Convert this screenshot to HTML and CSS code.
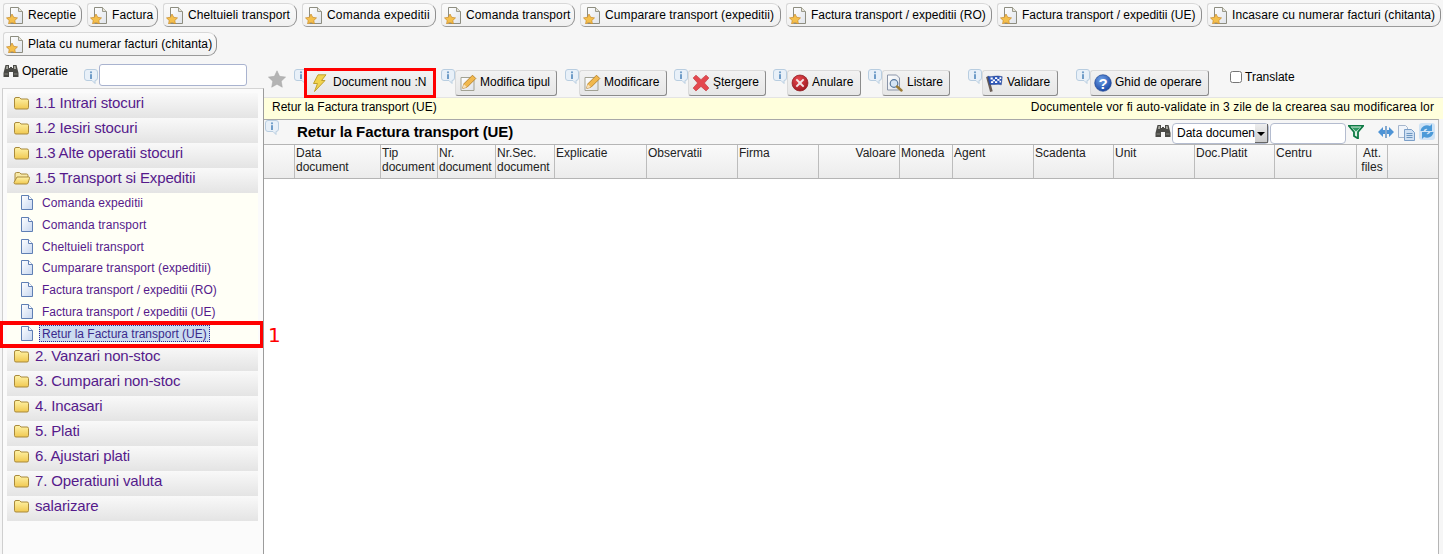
FILE: index.html
```html
<!DOCTYPE html>
<html lang="en">

<head>
    <meta charset="UTF-8">
    <meta name="viewport" content="width=device-width, initial-scale=1.0">
    <title>Retur la Factura transport (UE)</title>
    <link rel="stylesheet" href="styles.css">
</head>

<body>

    <!-- icon sprites -->
    <svg class="sprites" width="0" height="0">
        <defs>
            <linearGradient id="pageFill" x1="0" y1="0" x2="1" y2="1">
                <stop offset="0" stop-color="#ffffff"/>
                <stop offset="1" stop-color="#dfe3ea"/>
            </linearGradient>
            <linearGradient id="leafFill" x1="0" y1="0" x2="1" y2="1">
                <stop offset="0" stop-color="#ffffff"/>
                <stop offset="1" stop-color="#c6d6f0"/>
            </linearGradient>
            <linearGradient id="folderFill" x1="0" y1="0" x2="0" y2="1">
                <stop offset="0" stop-color="#fff3a8"/>
                <stop offset="1" stop-color="#f0c850"/>
            </linearGradient>
            <radialGradient id="helpFill" cx="0.4" cy="0.3" r="0.8">
                <stop offset="0" stop-color="#6d9fe6"/>
                <stop offset="1" stop-color="#123f9e"/>
            </radialGradient>
            <radialGradient id="stopFill" cx="0.4" cy="0.3" r="0.8">
                <stop offset="0" stop-color="#e8494f"/>
                <stop offset="1" stop-color="#97141c"/>
            </radialGradient>
            <symbol id="i-docstar" viewBox="0 0 18 18">
                <path d="M4.500 1.500h8l4 4v12h-12z" fill="url(#pageFill)" stroke="#8d8d80"/>
                <path d="M12.500 1.500v4h4" fill="#e6e3d6" stroke="#9a9a8c"/>
                <path d="M6 8l1.700 3.300 3.800.6-2.700 2.600.6 3.500L6 16.300 2.600 18l.6-3.500L.5 11.900l3.800-.6z" fill="#f4bf4c" stroke="#c98a26" stroke-width=".7"/>
            </symbol>
            <symbol id="i-info" viewBox="0 0 14 15">
                <path d="M3 .5h8a2.500 2.500 0 0 1 2.500 2.500v6a2.500 2.500 0 0 1-2.500 2.500v3l-3-3H3A2.500 2.500 0 0 1 .5 9V3A2.500 2.500 0 0 1 3 .5z" fill="#e8f0f8" stroke="#b8cde0"/>
                <circle cx="7" cy="3.300" r="1.100" fill="#6f9cc8"/>
                <rect x="6" y="5.200" width="2" height="4.800" fill="#6f9cc8"/>
            </symbol>
            <symbol id="i-folder" viewBox="0 0 16 14">
                <path d="M1 3a1.500 1.500 0 0 1 1.500-1.500h3.500l1.500 1.500h6A1.500 1.500 0 0 1 15 4.500v7a1.500 1.500 0 0 1-1.500 1.500h-11A1.500 1.500 0 0 1 1 11.500z" fill="url(#folderFill)" stroke="#a98a3c"/>
            </symbol>
            <symbol id="i-folderopen" viewBox="0 0 17 14">
                <path d="M2 11V3a1.500 1.500 0 0 1 1.500-1.500h3L8 3h5.500A1.500 1.500 0 0 1 15 4.500V6" fill="#f7e9a8" stroke="#a98a3c"/>
                <path d="M4 6h11.500a1 1 0 0 1 1 1.300L15 12a1.500 1.500 0 0 1-1.500 1h-11A1.500 1.500 0 0 1 1 11.500z" fill="url(#folderFill)" stroke="#a98a3c"/>
            </symbol>
            <symbol id="i-page" viewBox="0 0 14 15">
                <path d="M1.500 .5h7l4 4v10h-11z" fill="url(#leafFill)" stroke="#5f7fb4"/>
                <path d="M8.500 .5v4h4" fill="#ffffff" stroke="#5f7fb4"/>
            </symbol>
            <symbol id="i-star" viewBox="0 0 18 18">
                <path d="M9 .8l2.600 5.500 6 .8-4.400 4.100 1.100 6L9 14.300l-5.300 2.900 1.100-6L.4 7.100l6-.8z" fill="#b4b4b4" stroke="#a4a4a4" stroke-width=".5"/>
            </symbol>
            <symbol id="i-bolt" viewBox="0 0 18 18">
                <path d="M8 .8h8L11.500 6.500H15L4.500 17.500 7.500 9.500H3.500z" fill="#f2d34d" stroke="#bfa02f"/>
            </symbol>
            <symbol id="i-pencil" viewBox="0 0 18 18">
                <path d="M2 3.500h10l3 3v10H2z" fill="url(#pageFill)" stroke="#a2a294"/>
                <path d="M13.500 1.200l3.300 3.300-8.800 8.800-4.300 1 1-4.300z" fill="#f1b84e" stroke="#b47f25" stroke-width=".9"/>
                <path d="M4.700 10l3.300 3.300-4.300 1z" fill="#f7e1bb"/>
            </symbol>
            <symbol id="i-cross" viewBox="0 0 16 16">
                <path d="M3.500 1L8 5l4.500-4L15 3.500 11 8l4 4.500-2.500 2.500L8 11l-4.500 4L1 12.500 5 8 1 3.500z" fill="#e4484e" stroke="#c23a3f" stroke-width=".6"/>
            </symbol>
            <symbol id="i-stop" viewBox="0 0 18 18">
                <circle cx="9" cy="9" r="8" fill="url(#stopFill)" stroke="#8c1a1e" stroke-width=".7"/>
                <path d="M6 4.700L9 7.600l3-2.900 1.300 1.300L10.400 9l2.900 3-1.300 1.300L9 10.400l-3 2.900L4.700 12l2.900-3-2.900-3z" fill="#f3e6e6"/>
            </symbol>
            <symbol id="i-preview" viewBox="0 0 18 18">
                <path d="M1.500 1h9l3 3v12h-12z" fill="url(#pageFill)" stroke="#8b95a8"/>
                <circle cx="8" cy="9.500" r="3.800" fill="#d5e5f5" stroke="#56789e" stroke-width="1.200"/>
                <path d="M11 12.500l4.500 4" stroke="#9a7a34" stroke-width="2.400" stroke-linecap="round"/>
            </symbol>
            <symbol id="i-flag" viewBox="0 0 20 20">
                <path d="M1.500 3l4.500 16.500" stroke="#6a5d55" stroke-width="3"/>
                <path d="M2 2.500c5 1.500 9-1.500 16 .5l-1 9c-5-1.500-9 .5-13-.5z" fill="#2c55b8" stroke="#21408a" stroke-width=".6"/>
                <path d="M5 4h2.500v2H5zm5-.5h2.500v2H10zm5 0h2v2h-2zM7.500 6H10v2H7.500zm5-.5H15v2h-2.500zM5.500 8H8v2H5.500zM10 8h2.500v2H10zm5-.5h1.700v2H15z" fill="#ffffff"/>
            </symbol>
            <symbol id="i-help" viewBox="0 0 18 18">
                <circle cx="9" cy="9" r="8.300" fill="url(#helpFill)" stroke="#123a88" stroke-width=".6"/>
                <text x="9" y="14.500" text-anchor="middle" class="help-mark">?</text>
            </symbol>
            <symbol id="i-binoculars" viewBox="0 0 16 14">
                <path d="M2.500 1h3.500v3h1v-1h2v1h1V1h3.500l2 8v4H10V8H6v5H.500V9z" fill="#4a4a46"/>
                <path d="M3.500 2h1.500v3H3zM11 2h1.500L13 5h-2z" fill="#a8a8a0"/>
                <path d="M1.500 9.500h3.500v1H1.500zM11 9.500h3.500v1H11z" fill="#85857e"/>
            </symbol>
            <symbol id="i-filter" viewBox="0 0 16 14">
                <path d="M.5.500h15l-5.500 6.500v6.500L6 11V7z" fill="#dff3e6" stroke="#0f7a45" stroke-width="1.800"/>
                <path d="M3.500 2.500h9l-4.500 4z" fill="#2f9a63"/>
            </symbol>
            <symbol id="i-arrows" viewBox="0 0 16 12">
                <path d="M0 6l5-5v3H7v4H5v3zM16 6l-5-5v3H9v4h2v3z" fill="#4e94d6"/>
                <rect x="7.400" y="0" width="1.200" height="12" fill="#3a76b4"/>
            </symbol>
            <symbol id="i-copy" viewBox="0 0 17 16">
                <path d="M.5.500h7l2 2v10h-9z" fill="#f0f4fa" stroke="#a6b6cc"/>
                <path d="M6.500 4.500h7l3 3v8h-10z" fill="#cfe0f3" stroke="#7b9fc8"/>
                <path d="M8.500 8.500h6M8.500 10.500h6M8.500 12.500h6" stroke="#6d96c0"/>
            </symbol>
            <symbol id="i-refresh" viewBox="0 0 16 17">
                <rect x="0" y="0" width="16" height="17" rx="3" fill="#cfe3f5"/>
                <path d="M1.500 8a6.500 6.500 0 0 1 9.500-5L13 1v7H6.500l2-2A3.500 3.500 0 0 0 4.500 8z" fill="#4b9ad8"/>
                <path d="M14.500 9a6.500 6.500 0 0 1-9.500 5L3 16V9h6.500l-2 2a3.500 3.500 0 0 0 4-2z" fill="#4b9ad8"/>
            </symbol>
        </defs>
    </svg>

    <nav class="tabs">
        <a class="tab"><svg class="tab-icon"><use href="#i-docstar"/></svg>Receptie</a>
        <a class="tab"><svg class="tab-icon"><use href="#i-docstar"/></svg>Factura</a>
        <a class="tab"><svg class="tab-icon"><use href="#i-docstar"/></svg>Cheltuieli transport</a>
        <a class="tab"><svg class="tab-icon"><use href="#i-docstar"/></svg>Comanda expeditii</a>
        <a class="tab"><svg class="tab-icon"><use href="#i-docstar"/></svg>Comanda transport</a>
        <a class="tab"><svg class="tab-icon"><use href="#i-docstar"/></svg>Cumparare transport (expeditii)</a>
        <a class="tab"><svg class="tab-icon"><use href="#i-docstar"/></svg>Factura transport / expeditii (RO)</a>
        <a class="tab"><svg class="tab-icon"><use href="#i-docstar"/></svg>Factura transport / expeditii (UE)</a>
        <a class="tab"><svg class="tab-icon"><use href="#i-docstar"/></svg>Incasare cu numerar facturi (chitanta)</a>
        <a class="tab"><svg class="tab-icon"><use href="#i-docstar"/></svg>Plata cu numerar facturi (chitanta)</a>
    </nav>

    <div class="workspace">
        <aside class="side">
            <div class="op-search">
                <svg class="op-binoculars"><use href="#i-binoculars"/></svg>
                <span class="op-label">Operatie</span>
                <svg class="info op-info"><use href="#i-info"/></svg>
                <input class="op-input" type="text">
            </div>
            <div class="tree">
                <a class="node"><svg class="folder"><use href="#i-folder"/></svg>1.1 Intrari stocuri</a>
                <a class="node"><svg class="folder"><use href="#i-folder"/></svg>1.2 Iesiri stocuri</a>
                <a class="node"><svg class="folder"><use href="#i-folder"/></svg>1.3 Alte operatii stocuri</a>
                <a class="node"><svg class="folder"><use href="#i-folderopen"/></svg>1.5 Transport si Expeditii</a>
                <div class="children">
                    <a class="leaf"><svg class="page"><use href="#i-page"/></svg><span>Comanda expeditii</span></a>
                    <a class="leaf"><svg class="page"><use href="#i-page"/></svg><span>Comanda transport</span></a>
                    <a class="leaf"><svg class="page"><use href="#i-page"/></svg><span>Cheltuieli transport</span></a>
                    <a class="leaf"><svg class="page"><use href="#i-page"/></svg><span>Cumparare transport (expeditii)</span></a>
                    <a class="leaf leaf-tight"><svg class="page"><use href="#i-page"/></svg><span>Factura transport / expeditii (RO)</span></a>
                    <a class="leaf leaf-tight"><svg class="page"><use href="#i-page"/></svg><span>Factura transport / expeditii (UE)</span></a>
                    <a class="leaf leaf-tight leaf-selected"><svg class="page"><use href="#i-page"/></svg><span>Retur la Factura transport (UE)</span><b class="callout">1</b></a>
                </div>
                <a class="node"><svg class="folder"><use href="#i-folder"/></svg>2. Vanzari non-stoc</a>
                <a class="node"><svg class="folder"><use href="#i-folder"/></svg>3. Cumparari non-stoc</a>
                <a class="node"><svg class="folder"><use href="#i-folder"/></svg>4. Incasari</a>
                <a class="node"><svg class="folder"><use href="#i-folder"/></svg>5. Plati</a>
                <a class="node"><svg class="folder"><use href="#i-folder"/></svg>6. Ajustari plati</a>
                <a class="node"><svg class="folder"><use href="#i-folder"/></svg>7. Operatiuni valuta</a>
                <a class="node"><svg class="folder"><use href="#i-folder"/></svg>salarizare</a>
            </div>
        </aside>

        <main class="main">
            <div class="toolbar">
                <svg class="fav"><use href="#i-star"/></svg>
                <svg class="info"><use href="#i-info"/></svg>
                <button class="btn btn-marked btn-new"><svg class="btn-icon"><use href="#i-bolt"/></svg>Document nou :N</button>
                <svg class="info"><use href="#i-info"/></svg>
                <button class="btn btn-type"><svg class="btn-icon"><use href="#i-pencil"/></svg>Modifica tipul</button>
                <svg class="info"><use href="#i-info"/></svg>
                <button class="btn btn-edit"><svg class="btn-icon"><use href="#i-pencil"/></svg>Modificare</button>
                <svg class="info"><use href="#i-info"/></svg>
                <button class="btn btn-del"><svg class="btn-icon"><use href="#i-cross"/></svg>Ştergere</button>
                <svg class="info"><use href="#i-info"/></svg>
                <button class="btn btn-cancel"><svg class="btn-icon"><use href="#i-stop"/></svg>Anulare</button>
                <svg class="info"><use href="#i-info"/></svg>
                <button class="btn btn-list"><svg class="btn-icon"><use href="#i-preview"/></svg>Listare</button>
                <svg class="info"><use href="#i-info"/></svg>
                <button class="btn btn-valid"><svg class="btn-icon"><use href="#i-flag"/></svg>Validare</button>
                <svg class="info"><use href="#i-info"/></svg>
                <button class="btn btn-help"><svg class="btn-icon"><use href="#i-help"/></svg>Ghid de operare</button>
                <label class="translate"><input type="checkbox">Translate</label>
            </div>

            <div class="notice">
                <span>Retur la Factura transport (UE)</span>
                <span class="notice-right">Documentele vor fi auto-validate in 3 zile de la crearea sau modificarea lor</span>
            </div>

            <section class="grid-panel">
                <div class="grid-title">
                    <svg class="info title-info"><use href="#i-info"/></svg>
                    <h2>Retur la Factura transport (UE)</h2>
                    <div class="grid-tools">
                        <svg class="tool-binoculars"><use href="#i-binoculars"/></svg>
                        <div class="field-select"><span>Data documen</span><i class="caret"></i></div>
                        <input class="field-input" type="text">
                        <svg class="tool-filter"><use href="#i-filter"/></svg>
                        <svg class="tool-arrows"><use href="#i-arrows"/></svg>
                        <svg class="tool-copy"><use href="#i-copy"/></svg>
                        <svg class="tool-refresh"><use href="#i-refresh"/></svg>
                    </div>
                </div>
                <div class="grid-head">
                    <div class="cell"></div>
                    <div class="cell">Data<br>document</div>
                    <div class="cell">Tip<br>document</div>
                    <div class="cell">Nr.<br>document</div>
                    <div class="cell">Nr.Sec.<br>document</div>
                    <div class="cell">Explicatie</div>
                    <div class="cell">Observatii</div>
                    <div class="cell">Firma</div>
                    <div class="cell cell-right">Valoare</div>
                    <div class="cell">Moneda</div>
                    <div class="cell">Agent</div>
                    <div class="cell">Scadenta</div>
                    <div class="cell">Unit</div>
                    <div class="cell">Doc.Platit</div>
                    <div class="cell">Centru</div>
                    <div class="cell cell-center">Att. files</div>
                    <div class="cell cell-last"></div>
                </div>
            </section>
        </main>
    </div>

</body>

</html>
```
FILE: styles.css
```css
html, body {
    height: 100%;
}

body {
    margin: 0;
    height: 554px;
    overflow: hidden;
    background-color: #f6f6f6;
    color: #000;
    font-family: "Liberation Sans", Arial, sans-serif;
    font-size: 12px;
}

.sprites {
    position: absolute;
}

.help-mark {
    fill: #fff;
    font-family: "Liberation Sans", Arial, sans-serif;
    font-size: 15px;
    font-weight: bold;
}

/* top shortcuts */
.tabs {
    display: flex;
    flex-wrap: wrap;
    gap: 5px;
    height: 64px;
    padding: 3px 0 0 3px;
    box-sizing: border-box;
    align-content: flex-start;
}

.tab {
    display: flex;
    align-items: center;
    flex: none;
    height: 24px;
    box-sizing: border-box;
    padding-left: 2px;
    background: linear-gradient(#fbfbfb, #f0f0f0);
    border: 1px solid #d8d8d8;
    border-right-color: #8f8f8f;
    border-bottom-color: #9a9a9a;
    border-radius: 3px 9px 9px 5px;
    letter-spacing: .1px;
    white-space: nowrap;
}

.tab:nth-child(1) { width: 79px; }
.tab:nth-child(2) { width: 71px; }
.tab:nth-child(3) { width: 134px; }
.tab:nth-child(4) { width: 134px; letter-spacing: .2px; }
.tab:nth-child(5) { width: 134px; }
.tab:nth-child(6) { width: 201px; }
.tab:nth-child(7) { width: 206px; letter-spacing: 0; }
.tab:nth-child(8) { width: 205px; letter-spacing: 0; }
.tab:nth-child(9) { width: 234px; }
.tab:nth-child(10) { width: 214px; }

.tab-icon {
    width: 18px;
    height: 18px;
    margin-right: 4px;
    flex: none;
}

.workspace {
    display: flex;
    height: 490px;
}

/* left menu */
.side {
    width: 264px;
    flex: none;
}

.op-search {
    display: flex;
    align-items: flex-start;
    height: 24px;
}

.op-binoculars {
    width: 16px;
    height: 14px;
    margin: 0 3px 0 3px;
    flex: none;
}

.op-label {
    width: 62px;
    line-height: 15px;
}

.op-info {
    margin: 4px 1px 0 0;
}

.op-input {
    width: 148px;
    height: 22px;
    box-sizing: border-box;
    padding: 0 3px;
    background: #fff;
    border: 1px solid #a9b3cf;
    border-radius: 3px;
}

.tree {
    margin-left: 2px;
    height: 466px;
    padding: 4px 5px 0 4px;
    box-sizing: border-box;
    background-color: #fbfbfb;
    border-top: 1px solid #d4d4d4;
    border-left: 1px solid #cfcfcf;
    border-right: 1px solid #9c9c9c;
}

.node {
    display: flex;
    align-items: flex-start;
    height: 25px;
    padding-left: 6px;
    box-sizing: border-box;
    background: linear-gradient(#f9f9f9, #e4e4e4);
    color: #551a8b;
    font-size: 15px;
    letter-spacing: -.15px;
    line-height: 20px;
    white-space: nowrap;
}

.folder {
    width: 17px;
    height: 14px;
    margin: 3px 5px 0 0;
    flex: none;
}

.children {
    background-color: #fffff6;
}

.leaf {
    display: flex;
    align-items: flex-start;
    height: 21.800px;
    padding-left: 13px;
    box-sizing: border-box;
    color: #551a8b;
    letter-spacing: .1px;
    line-height: 20px;
    white-space: nowrap;
}

.leaf-tight {
    letter-spacing: 0;
}

.page {
    width: 14px;
    height: 15px;
    margin: 2px 8px 0 0;
    flex: none;
}

.leaf-selected {
    position: relative;
}

.leaf-selected span {
    height: 17px;
    margin: 1px 0 0 -3px;
    padding: 0 2px;
    box-sizing: border-box;
    line-height: 16px;
    background-color: #cbdcf0;
    border: 1px dotted #2a2a9c;
    color: #3a2a8c;
}

/* red annotation round the selected row */
.leaf-selected::after {
    content: "";
    position: absolute;
    top: -3px;
    bottom: -2px;
    left: -7px;
    right: -5px;
    border-style: solid;
    border-color: #f00;
    border-width: 4px 3px;
}

.callout {
    position: absolute;
    top: -1px;
    left: 100%;
    margin-left: 10px;
    color: #f00;
    font-family: "DejaVu Sans", sans-serif;
    font-size: 20px;
    font-weight: normal;
    line-height: 24px;
}

/* right side */
.main {
    flex: 1;
    min-width: 0;
}

.toolbar {
    display: flex;
    align-items: flex-start;
    height: 33px;
    padding-left: 4px;
    box-sizing: border-box;
}

.fav {
    width: 18px;
    height: 18px;
    margin: 6px 8px 0 0;
    flex: none;
}

.info {
    width: 14px;
    height: 15px;
    flex: none;
    margin-top: 5px;
}

.btn {
    display: flex;
    align-items: center;
    height: 26px;
    margin: 6px 7px 0 0;
    padding: 0 6px 2px 3px;
    box-sizing: border-box;
    background: linear-gradient(#f2f2f2, #e6e6e6);
    border: 1px solid #dadada;
    border-right-color: #8c8c8c;
    border-bottom-color: #8c8c8c;
    border-radius: 3px;
    color: #000;
    font-family: inherit;
    font-size: 12px;
    white-space: nowrap;
}

.btn-new { width: 128px; margin-left: -2px; }
.btn-type { width: 102px; margin-right: 8px; }
.btn-edit { width: 88px; }
.btn-del { width: 78px; }
.btn-cancel { width: 74px; }
.btn-list { width: 68px; margin-right: 18px; }
.btn-valid { width: 76px; margin-right: 18px; }
.btn-help { width: 119px; margin-right: 21px; }

.btn-icon {
    width: 18px;
    height: 18px;
    margin: 2px 3px 0 0;
    flex: none;
}

.btn-new .btn-icon { margin-right: 5px; }

.btn-marked {
    border-radius: 0;
    outline: 3px solid #f00;
    outline-offset: -1px;
}

.translate {
    display: flex;
    align-items: center;
    height: 14px;
    margin-top: 6px;
    white-space: nowrap;
}

.translate input {
    width: 12px;
    height: 12px;
    margin: 0 3px 0 0;
}

.notice {
    display: flex;
    justify-content: space-between;
    height: 22px;
    padding: 0 9px 0 8px;
    box-sizing: border-box;
    background-color: #ffffdc;
    border-top: 1px solid #e4e4e4;
    line-height: 18px;
    white-space: nowrap;
}

.notice-right {
    letter-spacing: .12px;
}

.grid-panel {
    width: 1175px;
    height: 435px;
    box-sizing: border-box;
    background-color: #fff;
    border-top: 1px solid #a8a8a8;
    border-right: 1px solid #b5b5b5;
}

.grid-title {
    display: flex;
    align-items: flex-start;
    height: 24px;
    background-color: #f6f6f6;
}

.title-info {
    margin: 0 0 0 1px;
}

.grid-title h2 {
    margin: 3px 0 0 18px;
    font-size: 15px;
    letter-spacing: -.1px;
    line-height: 18px;
    white-space: nowrap;
}

.grid-tools {
    display: flex;
    align-items: flex-start;
    margin-left: auto;
    padding-right: 3px;
}

.tool-binoculars {
    width: 16px;
    height: 14px;
    margin: 4px 1px 0 0;
}

.field-select {
    display: flex;
    justify-content: space-between;
    width: 97px;
    height: 21px;
    margin-top: 3px;
    padding-left: 4px;
    box-sizing: border-box;
    background-color: #fff;
    border: 1px solid #b4bccf;
    border-radius: 4px;
    line-height: 18px;
    white-space: nowrap;
}

.caret {
    position: relative;
    width: 12px;
    background: linear-gradient(#eee, #ccc);
    border-right: 1px solid #666;
    border-bottom: 1px solid #666;
}

.caret::after {
    content: "";
    position: absolute;
    top: 8px;
    left: 2px;
    border: 4px solid transparent;
    border-top-color: #000;
    border-bottom: 0;
}

.field-input {
    width: 76px;
    height: 21px;
    margin: 3px 0 0 1px;
    padding: 0 3px;
    box-sizing: border-box;
    background-color: #fff;
    border: 1px solid #b4bccf;
    border-radius: 4px;
}

.tool-filter {
    width: 16px;
    height: 14px;
    margin: 5px 14px 0 2px;
}

.tool-arrows {
    width: 16px;
    height: 12px;
    margin: 6px 4px 0 0;
}

.tool-copy {
    width: 17px;
    height: 16px;
    margin: 5px 4px 0 0;
}

.tool-refresh {
    width: 16px;
    height: 17px;
    margin-top: 3px;
}

.grid-head {
    display: grid;
    grid-template-columns: 31px 86px 57px 58px 59px 92px 91px 81px 81px 53px 81px 80px 81px 80px 82px 31px 1fr;
    height: 35px;
    box-sizing: border-box;
    background: linear-gradient(#fafafa, #ececec);
    border-top: 1px solid #b5b5b5;
    border-bottom: 1px solid #b5b5b5;
}

.cell {
    padding: 1px 1px 0 1px;
    border-right: 1px solid #bcbcbc;
    color: #222;
    line-height: 14px;
}

.cell-right {
    text-align: right;
    padding-right: 3px;
}

.cell-center {
    text-align: center;
}

.cell-last {
    border-right: 0;
}
```
